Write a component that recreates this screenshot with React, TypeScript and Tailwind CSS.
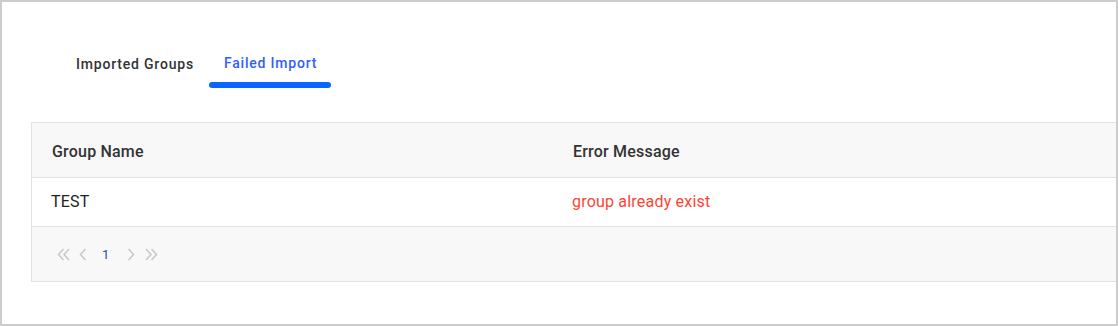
import React from "react";

const Chev = ({ dir, double }: { dir: "l" | "r"; double?: boolean }) => {
  const w = double ? 13 : 8;
  const paths =
    dir === "l"
      ? double
        ? ["M6.5 1 L1.5 6.5 L6.5 12", "M12 1 L7 6.5 L12 12"]
        : ["M6.5 1 L1.5 6.5 L6.5 12"]
      : double
      ? ["M1 1 L6 6.5 L1 12", "M6.5 1 L11.5 6.5 L6.5 12"]
      : ["M1.5 1 L6.5 6.5 L1.5 12"];
  return (
    <svg width={w} height="13" viewBox={`0 0 ${w} 13`} fill="none" stroke="#c9c9c9" strokeWidth="1.6">
      {paths.map((d, i) => (
        <path key={i} d={d} />
      ))}
    </svg>
  );
};

export default function App() {
  return (
    <div
      className="w-[1118px] h-[326px] border-2 border-[#cccccc] bg-white overflow-hidden flex flex-col"
      style={{ fontFamily: "Roboto, 'Liberation Sans', sans-serif" }}
    >
      <div className="flex pl-[59px] pt-[48px] h-[120px]">
        <div className="px-[15px] h-[38px] flex items-start pt-[4px] text-[14px] font-medium tracking-[0.8px] text-[#333333]">
          Imported Groups
        </div>
        <div className="relative pl-[15px] pr-[14px] h-[38px] flex items-start pt-[3px] text-[14px] font-medium tracking-[0.8px] text-[#3060ff]">
          Failed Import
          <div className="absolute left-0 right-0 bottom-0 h-[6px] rounded-full bg-[#0a66ff]" />
        </div>
      </div>
      <div className="ml-[29px] border-l border-t border-b border-[#e3e3e3]">
        <div className="flex h-[55px] items-center bg-[#f8f8f8] border-b border-[#e3e3e3] text-[16px] font-medium tracking-[0.2px] text-[#333333] pt-[4px]">
          <div className="w-[521px] pl-[20px]">Group Name</div>
          <div className="pl-[20px]">Error Message</div>
        </div>
        <div className="flex h-[49px] items-center border-b border-[#e3e3e3] text-[16px] tracking-[0.2px]">
          <div className="w-[521px] pl-[19px] text-[#222222]">TEST</div>
          <div className="pl-[19px] text-[#ff4433]">group already exist</div>
        </div>
        <div className="flex h-[54px] items-center bg-[#f8f8f8] pl-[25px]">
          <Chev dir="l" double />
          <div className="w-[9px]" />
          <Chev dir="l" />
          <span className="ml-[15px] mr-[18px] text-[13px] text-[#1f4f9a] mt-[2px]">1</span>
          <Chev dir="r" />
          <div className="w-[10px]" />
          <Chev dir="r" double />
        </div>
      </div>
    </div>
  );
}
